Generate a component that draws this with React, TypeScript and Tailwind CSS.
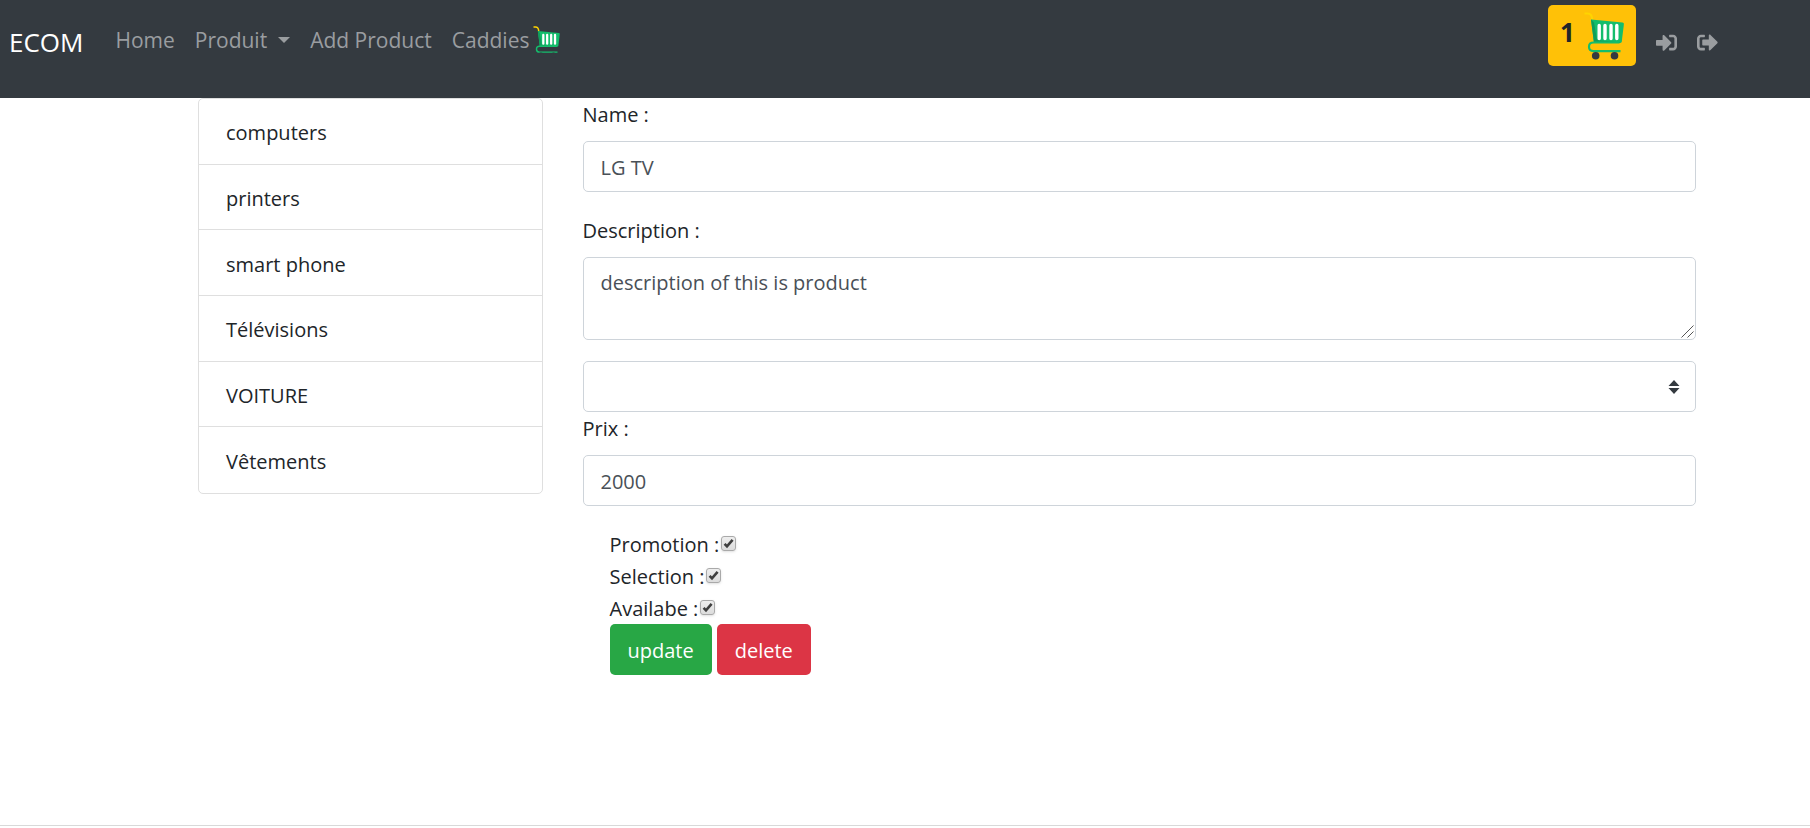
import { useState } from "react";
import type { ReactNode } from "react";
import { FaSignInAlt, FaSignOutAlt } from "react-icons/fa";

const categories = ["computers", "printers", "smart phone", "Télévisions", "VOITURE", "Vêtements"];

function Cart({ className }: { className: string }) {
  return (
    <svg viewBox="0 0 40 48" className={className} aria-hidden="true">
      <path d="M.5 1.500H3.500Q8 1.500 8.300 7.500" fill="none" stroke="#ffd400" strokeWidth="2.200" />
      <path d="M7 7.500L38.500 10.500Q40 10.700 39.900 12L37.800 29.500Q37.500 31 36 31H10Z" fill="#14bd6c" />
      <path d="M7 7.500L10 10.500L13 28L36 30.500L36 31H10Z" fill="#109d5b" />
      <path d="M15.200 13.500V26.500M21 13.500V26.500M27 13.500V26.500M32.800 13.500V26.500" stroke="#fff" strokeWidth="3.400" strokeLinecap="round" />
      <path d="M35.500 30.500H9.500Q5 30.500 5 34.800T9.500 39.200H36.500" fill="none" stroke="#14bd6c" strokeWidth="2.200" />
      <circle cx="11.700" cy="43.700" r="3.800" fill="#343a40" />
      <circle cx="30.500" cy="43.700" r="3.800" fill="#343a40" />
    </svg>
  );
}

const control =
  "block w-full rounded-[5px] border border-[#ced4da] bg-white px-[17px] text-[#495057] outline-none focus:border-[#80bdff]";

function Tick({ id, children }: { id: string; children: ReactNode }) {
  return (
    <div className="flex h-8 items-center">
      <label htmlFor={id}>{children}</label>
      <span className="mb-1 ml-0.5 grid size-[15px]">
        <input
          id={id}
          type="checkbox"
          defaultChecked
          className="peer col-start-1 row-start-1 size-[15px] appearance-none rounded-[3px] border border-[#a9a9a9] bg-linear-to-b from-[#eeeeee] to-[#dcdcdc] shadow-sm"
        />
        <svg viewBox="0 0 15 15" className="pointer-events-none invisible col-start-1 row-start-1 size-[15px] peer-checked:visible" aria-hidden="true">
          <path d="M3.600 7.800L6 10.400L11.600 3.800" fill="none" stroke="#3f3f3f" strokeWidth="2.600" />
        </svg>
      </span>
    </div>
  );
}

export default function App() {
  const [name, setName] = useState("LG TV");
  const [price, setPrice] = useState("2000");
  return (
    <div className="flex min-h-screen flex-col bg-white font-['Open_Sans','Noto_Sans',sans-serif] text-[20px] leading-8 text-[#212529]">
      <header className="flex min-h-[98px] items-start bg-[#343a40] pr-[92px] pl-[9px] text-[#9a9da0]">
        <a href="#" className="mt-[22px] mr-8 text-[26px] leading-10 text-white">ECOM</a>
        <nav className="mt-[22px] flex grow items-center gap-5 text-[21px]">
          <a href="#home">Home</a>
          <button type="button" className="flex items-center gap-[11px]">
            Produit
            <span className="border-x-[6px] border-t-[6px] border-x-transparent border-t-current" />
          </button>
          <a href="#add">Add Product</a>
          <a href="#caddies" className="flex items-center gap-1">
            Caddies
            <Cart className="mt-1 h-8 w-[27px]" />
          </a>
        </nav>
        <div className="flex items-start">
          <a href="#cart" className="mt-[5px] flex h-[61px] w-22 items-start rounded-[5px] bg-[#ffc107] pt-[7px] pl-3 text-[26px] leading-10 font-bold text-[#212529]">
            1
            <Cart className="ml-[9px] h-12 w-10" />
          </a>
          <a href="#login" aria-label="Log in" className="mt-8 ml-5"><FaSignInAlt size={21} /></a>
          <a href="#logout" aria-label="Log out" className="mt-8 ml-5"><FaSignOutAlt size={21} /></a>
        </div>
      </header>
      <main className="grid grow grid-cols-4 items-start gap-10 pr-[114px] pl-[198px]">
        <ul className="grid min-h-[396px] auto-rows-fr rounded-[5px] border border-[#dfdfdf]">
          {categories.map((c) => (
            <li key={c} className="flex items-center border-b border-[#dfdfdf] px-[27px] pt-1 last:border-b-0">
              <a href="#category">{c}</a>
            </li>
          ))}
        </ul>
        <form className="col-span-3" onSubmit={(e) => e.preventDefault()}>
          <label htmlFor="name" className="mb-[10px] block pt-px">Name :</label>
          <input id="name" value={name} onChange={(e) => setName(e.target.value)} className={`${control} h-[51px] pt-0.5`} />
          <label htmlFor="description" className="mt-[22px] mb-[10px] block pt-px">Description :</label>
          <div className="relative">
            <textarea id="description" defaultValue="description of this is product" className={`${control} h-[83px] pt-[9px] [&::-webkit-resizer]:hidden`} />
            <svg viewBox="0 0 13 13" className="pointer-events-none absolute right-[2px] bottom-[2px] size-[13px]" aria-hidden="true">
              <path d="M.5 12.500L12.500 .5M6.500 12.500L12.500 6.500" stroke="#555" />
            </svg>
          </div>
          <div className="relative mt-[21px]">
            <select aria-label="Category" defaultValue="" className={`${control} h-[51px] appearance-none`}>
              <option value="" />
              {categories.map((c) => (
                <option key={c}>{c}</option>
              ))}
            </select>
            <svg viewBox="0 0 12 14" className="pointer-events-none absolute top-[19px] right-4 h-3.5 w-3" aria-hidden="true">
              <path d="M.5 6L6 0L11.500 6ZM.5 8L6 14L11.500 8Z" fill="#343a40" />
            </svg>
          </div>
          <label htmlFor="price" className="mb-[10px] block pt-px">Prix :</label>
          <input id="price" value={price} onChange={(e) => setPrice(e.target.value)} className={`${control} h-[51px] pt-0.5`} />
          <div className="mt-[22px] pl-[27px]">
            <div className="pt-px">
              <Tick id="promotion">Promotion :</Tick>
              <Tick id="selection">Selection :</Tick>
              <Tick id="available">Availabe :</Tick>
            </div>
            <div className="-mt-px flex gap-[5px] text-white">
              <button type="submit" className="h-[51px] rounded-[5px] bg-[#28a745] px-[18px] pt-0.5">update</button>
              <button type="button" className="h-[51px] rounded-[5px] bg-[#dc3545] px-[18px] pt-0.5">delete</button>
            </div>
          </div>
        </form>
      </main>
      <hr className="mb-0.5 border-[#d9d9d9]" />
    </div>
  );
}
